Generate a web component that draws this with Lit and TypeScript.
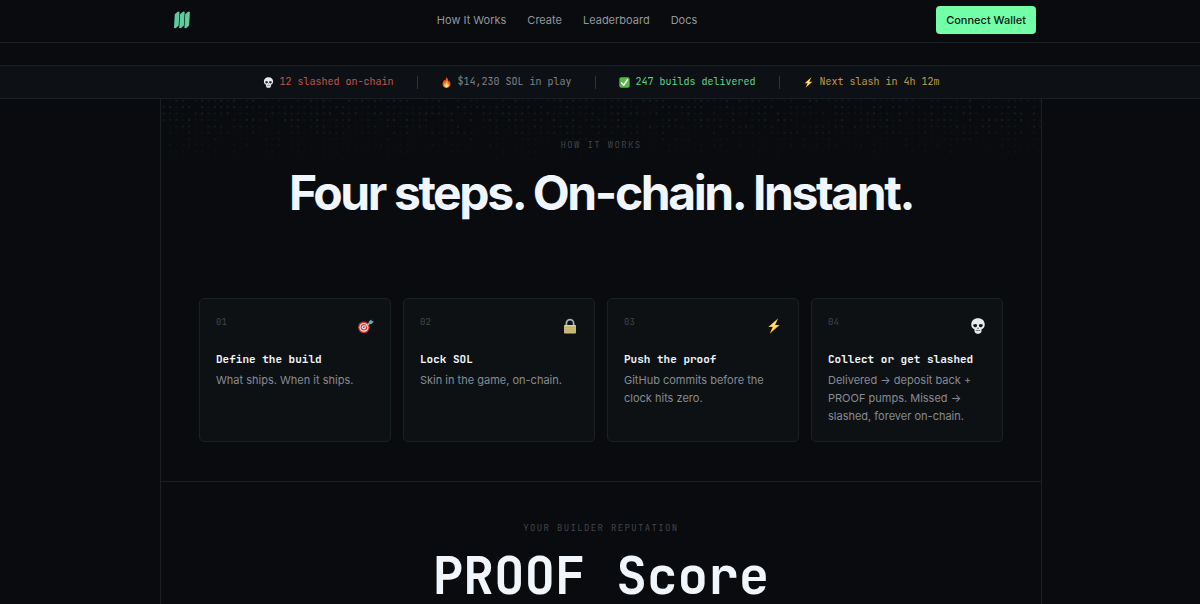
import { LitElement, html, css, svg } from "lit";
import { customElement } from "lit/decorators.js";

const skull = html`<svg class="emoji" viewBox="0 0 16 16" aria-hidden="true">
  <path d="M8 .3C3.900.3 1.300 2.800 1.300 6.400c0 1.500.4 2.700 1.100 3.500.5.6 1.500.7 1.800 1.200.4.5.1 2.100.5 2.900.4 1.100 1.800 1.800 3.300 1.800s2.900-.7 3.300-1.800c.4-.8.100-2.400.5-2.900.3-.5 1.300-.6 1.800-1.200.7-.8 1.100-2 1.100-3.500C14.700 2.800 12.100.3 8 .3z" fill="#e9eaed"/>
  <path d="M3.500 6.600c1-.8 3-.7 3.500.1.400.9-.2 2.300-1.300 2.600-1.300.3-3.200-1.400-2.200-2.700zM12.500 6.600c-1-.8-3-.7-3.500.1-.4.9.2 2.300 1.300 2.600 1.300.3 3.200-1.400 2.200-2.700z" fill="#15171b"/>
  <path d="M8 9.200l-.9 1.500h1.800z" fill="#2a2c31"/>
  <path d="M5.800 12.500h4.400" stroke="#55575d" stroke-width=".8" fill="none"/>
</svg>`;

const fire = html`<svg class="emoji" viewBox="0 0 16 16" aria-hidden="true">
  <path d="M7.200.3c.6 2.200-.3 3.500-1.500 5-.3-.8-.7-1.200-1.200-1.500.1 2.200-2.300 3.900-2.300 6.900 0 3 2.400 5 5.800 5s5.800-2 5.800-5.200c0-2.200-1-3.300-1.500-5-.6.3-1 .9-1.200 1.600C10.900 4.200 9.600 1.700 7.200.3z" fill="#ee5a24"/>
  <path d="M8.200 5c.2 1.900-1.400 2.800-2.200 4.200-.3-.4-.5-.8-.7-1-.6 1-1.300 1.900-1.300 3.300C4 13.900 5.700 15.300 8 15.300s4-1.500 4-3.700c0-1.200-.6-2-.9-2.900-.4.3-.6.7-.8 1.100C10.200 8 9.800 6.200 8.200 5z" fill="#ffa62b"/>
  <path d="M8.200 9.200c-.3 1.200-2 1.900-2 3.600 0 1.400.8 2.300 2 2.300s2-.9 2-2.200c0-1.500-1.600-2.300-2-3.700z" fill="#ffe789"/>
</svg>`;

const check = html`<svg class="emoji" viewBox="0 0 16 16" aria-hidden="true">
  <rect x=".5" y=".5" width="15" height="15" rx="2.500" fill="#55b948"/>
  <path d="M3.800 8.500l3 3.500 5.400-8" stroke="#fff" stroke-width="2" stroke-linecap="round" stroke-linejoin="round" fill="none"/>
</svg>`;

const bolt = html`<svg class="emoji" viewBox="0 0 16 16" aria-hidden="true">
  <path d="M12.200.3L2.300 9h4.300l-2.900 6.700L13.700 7H9.200z" fill="#f9b62f"/>
  <path d="M11 1.800L4.200 8.300h3.500L5.500 13l6.300-5.400H8.300z" fill="#ffe27a"/>
</svg>`;

const target = html`<svg class="emoji" viewBox="0 0 16 16" aria-hidden="true">
  <circle cx="5.900" cy="9.300" r="5.800" fill="#d8382f"/>
  <circle cx="5.900" cy="9.300" r="4.400" fill="#f3e9e7"/>
  <circle cx="5.900" cy="9.300" r="3.300" fill="#d8382f"/>
  <circle cx="5.900" cy="9.300" r="2.100" fill="#f3e9e7"/>
  <circle cx="5.900" cy="9.300" r="1" fill="#d8382f"/>
  <path d="M6.200 9L12.500 4.800" stroke="#a7c4b5" stroke-width="1.400"/>
  <path d="M10.400 6l.4-2.600L13.300 1.400l.5 1.600 2.100.6-2.300 2.400z" fill="#5fa9b8"/>
</svg>`;

const lock = html`<svg class="emoji" viewBox="0 0 16 16" aria-hidden="true">
  <path d="M4.400 8V5.200a3.600 3.600 0 0 1 7.200 0V8" stroke="#a9adb8" stroke-width="1.700" fill="none"/>
  <rect x="2" y="7" width="12" height="8.600" rx="1" fill="#cdbd7c"/>
  <path d="M2.300 9.300h11.400M2.300 11.300h11.400M2.300 13.300h11.400" stroke="#b3a25c" stroke-width=".5"/>
  <rect x="2.500" y="7.300" width="11" height=".8" fill="#e8dca8"/>
</svg>`;

const PITCH = 6.4;
const COLUMNS = 300;
const ROWS = 11;
const SHADES = 4;

/* Groups a seeded scatter of dots by shade, so each shade is one path. */
function scatterDots(): string[] {
  let seed = 17;
  const next = () => (seed = (seed * 16807) % 2147483647) / 2147483647;
  const paths = Array.from({ length: SHADES }, () => "");
  for (let r = 0; r < ROWS; r++) {
    for (let c = 0; c < COLUMNS; c++) {
      const shade = Math.floor(next() * SHADES);
      const x = (c * PITCH + 1.6).toFixed(1);
      const y = (r * PITCH + 0.8).toFixed(1);
      paths[shade] += `M${x} ${y}h2v2h-2z`;
    }
  }
  return paths;
}

const dots = scatterDots();

const stats = [
  { icon: skull, text: "12 slashed on-chain", tone: "red" },
  { icon: fire, text: "$14,230 SOL in play", tone: "grey" },
  { icon: check, text: "247 builds delivered", tone: "green" },
  { icon: bolt, text: "Next slash in 4h 12m", tone: "amber" },
];

const steps = [
  { no: "01", icon: target, title: "Define the build", text: "What ships. When it ships." },
  { no: "02", icon: lock, title: "Lock SOL", text: "Skin in the game, on-chain." },
  { no: "03", icon: bolt, title: "Push the proof", text: "GitHub commits before the clock hits zero." },
  {
    no: "04",
    icon: skull,
    title: "Collect or get slashed",
    text: "Delivered → deposit back + PROOF pumps. Missed → slashed, forever on-chain.",
  },
];

@customElement("app-root")
export class AppRoot extends LitElement {
  static styles = css`
    :host {
      --line: #1b2024;
      --panel: #0d1114;
      --ink: #f0f6fc;
      --muted: #868b93;
      --faint: #41464b;
      --mono: "JetBrains Mono", "DejaVu Sans Mono", "Liberation Mono", monospace;
      display: flex;
      flex-direction: column;
      min-height: 100vh;
      background: #090b0e;
      color: var(--ink);
      font-family: Inter, "Liberation Sans", sans-serif;
    }
    .topbar {
      display: flex;
      justify-content: center;
      padding: 6px 0 8px 10px;
      border-bottom: 1px solid var(--line);
    }
    .topbar-inner {
      display: flex;
      align-items: center;
      justify-content: space-between;
      width: 100%;
      max-width: 862px;
    }
    .logo {
      display: block;
      width: 24px;
      height: 18px;
    }
    .logo svg {
      display: block;
      width: 16px;
      height: 18px;
    }
    .links {
      display: flex;
      gap: 21px;
    }
    .links a {
      color: #93979d;
      font-size: 11px;
      line-height: 16px;
      text-decoration: none;
    }
    .wallet {
      height: 28px;
      padding: 0 10px;
      border: 0;
      border-radius: 4px;
      background: #72ffa8;
      color: #0a1a12;
      font: 500 11px/16px Inter, sans-serif;
    }
    .ticker {
      display: flex;
      justify-content: center;
      align-items: center;
      gap: 23px;
      margin: 22px 0 0;
      padding: 8px 0 8px 2px;
      border: solid var(--line);
      border-width: 1px 0;
      background: #0d1116;
      font-family: var(--mono);
      font-size: 10px;
      line-height: 16px;
    }
    .stat {
      display: flex;
      align-items: center;
      gap: 6px;
      white-space: pre;
    }
    .ticker .emoji {
      width: 11px;
      height: 11px;
    }
    .rule {
      width: 1px;
      height: 13px;
      background: #30353a;
    }
    .red { color: #c4544d; }
    .grey { color: #7d828a; }
    .green { color: #5fd38d; }
    .amber { color: #c39c4a; }
    .emoji {
      display: block;
      flex: none;
    }
    main {
      display: flex;
      flex: 1;
      justify-content: center;
      padding-left: 2px;
    }
    .frame {
      box-sizing: border-box;
      width: 100%;
      max-width: 882px;
      border: solid var(--line);
      border-width: 0 1px;
    }
    .section {
      position: relative;
      padding: 39px 38px;
      text-align: center;
    }
    .section + .section {
      padding-bottom: 0;
      border-top: 1px solid var(--line);
    }
    .dots {
      position: absolute;
      inset: 0 0 auto;
      width: 100%;
      height: 70px;
      -webkit-mask-image: linear-gradient(#000, #000 30%, transparent);
      mask-image: linear-gradient(#000, #000 30%, transparent);
    }
    .shade-0 { fill: #0c0f12; }
    .shade-1 { fill: #0f1416; }
    .shade-2 { fill: #12181a; }
    .shade-3 { fill: #161f1f; }
    .eyebrow {
      margin: 0;
      color: var(--faint);
      font-family: var(--mono);
      font-size: 9px;
      line-height: 14px;
      letter-spacing: 0.15em;
      text-transform: uppercase;
    }
    h2 {
      margin: 13px 0 0;
      font-size: 48px;
      font-weight: 700;
      line-height: 56px;
      letter-spacing: -0.05em;
    }
    .score {
      font-family: var(--mono);
      font-size: 51px;
      letter-spacing: normal;
    }
    .steps {
      display: grid;
      grid-template-columns: repeat(4, 1fr);
      gap: 12px;
      margin: 77px 0 0;
      padding: 0;
      list-style: none;
      text-align: left;
    }
    .step {
      padding: 16px;
      border: 1px solid var(--line);
      border-radius: 5px;
      background: var(--panel);
    }
    .step-head {
      display: flex;
      justify-content: space-between;
      height: 34px;
    }
    .step-head .emoji {
      width: 16px;
      height: 16px;
      margin-top: 3px;
    }
    .no {
      color: var(--faint);
      font-family: var(--mono);
      font-size: 9px;
      line-height: 14px;
    }
    h3 {
      margin: 0;
      font-family: var(--mono);
      font-size: 11px;
      font-weight: 700;
      line-height: 20px;
      white-space: nowrap;
    }
    .step p {
      margin: 2px 0 0;
      color: var(--muted);
      font-size: 11px;
      line-height: 18px;
    }
  `;

  render() {
    return html`
      <header class="topbar">
        <div class="topbar-inner">
          <a class="logo" href="#" aria-label="Home">
            <svg viewBox="0 0 16 18" aria-hidden="true">
              <g fill="#5fcb9f">
                <path d="M.8 3.200L4 .6l1.500.3L4.700 14.500 1.700 17.300 0 17z" />
                <path d="M6 3.200L9.200.6l1.500.3L9.900 14.500 6.900 17.300 5.200 17z" />
                <path d="M11.200 3.200L14.400.6l1.500.3L15.100 14.500l-3 2.800-1.700-.3z" />
              </g>
            </svg>
          </a>
          <nav class="links">
            <a href="#how">How It Works</a>
            <a href="#create">Create</a>
            <a href="#leaderboard">Leaderboard</a>
            <a href="#docs">Docs</a>
          </nav>
          <button class="wallet" type="button">Connect Wallet</button>
        </div>
      </header>
      <div class="ticker">
        ${stats.map(
          (s, i) => html`${i ? html`<span class="rule"></span>` : ""}
            <span class="stat ${s.tone}">${s.icon}<span>${s.text}</span></span>`
        )}
      </div>
      <main>
        <div class="frame">
          <section class="section" id="how">
            <svg class="dots" aria-hidden="true">
              ${dots.map((d, i) => svg`<path class="shade-${i}" d=${d} />`)}
            </svg>
            <p class="eyebrow">How it works</p>
            <h2>Four steps. On-chain. Instant.</h2>
            <ol class="steps">
              ${steps.map(
                (s) => html`<li class="step">
                  <div class="step-head"><span class="no">${s.no}</span>${s.icon}</div>
                  <h3>${s.title}</h3>
                  <p>${s.text}</p>
                </li>`
              )}
            </ol>
          </section>
          <section class="section">
            <p class="eyebrow">Your builder reputation</p>
            <h2 class="score">PROOF Score</h2>
          </section>
        </div>
      </main>
    `;
  }
}
